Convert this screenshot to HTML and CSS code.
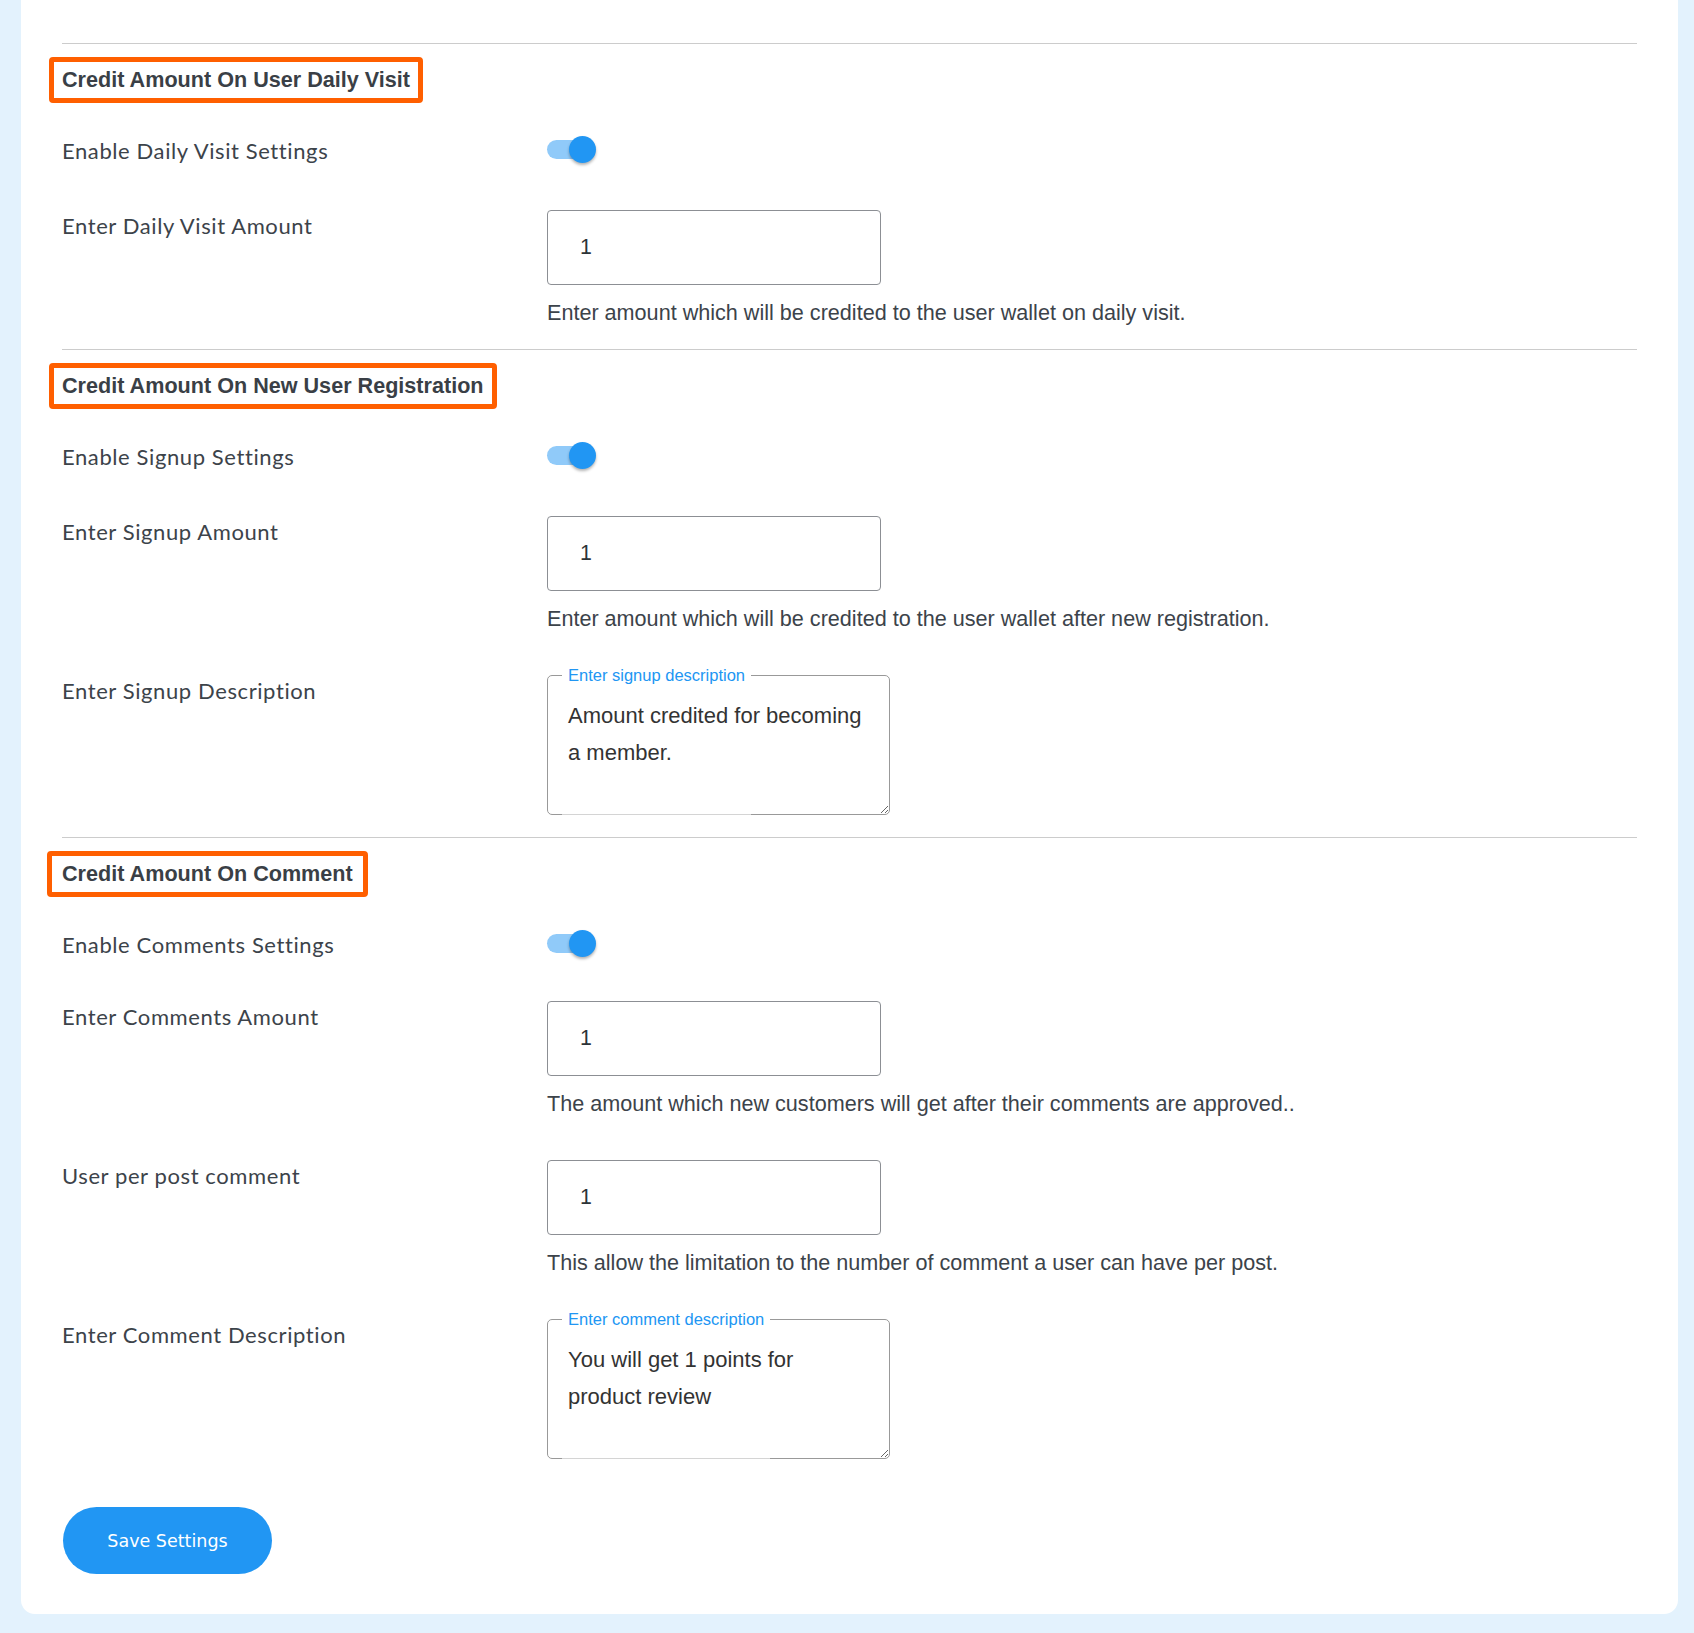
FILE: index.html
```html
<!DOCTYPE html>
<html lang="en">
<head>
<meta charset="UTF-8">
<meta name="viewport" content="width=device-width, initial-scale=1.0">
<title>Wallet Credit Settings</title>
<link rel="stylesheet" href="styles.css">
</head>
<body>
    <form class="card" onsubmit="return false;">

        <section class="group">
            <hr class="divider">
            <h2 class="group-title">Credit Amount On User Daily Visit</h2>
            <div class="row row-switch">
                <div class="row-label">Enable Daily Visit Settings</div>
                <div class="row-field">
                    <label class="switch">
                        <input type="checkbox" checked>
                        <span class="slider"></span>
                    </label>
                </div>
            </div>
            <div class="row">
                <label class="row-label" for="daily-amount">Enter Daily Visit Amount</label>
                <div class="row-field">
                    <input id="daily-amount" class="amount" type="number" value="1">
                    <p class="help">Enter amount which will be credited to the user wallet on daily visit.</p>
                </div>
            </div>
        </section>

        <section class="group">
            <hr class="divider">
            <h2 class="group-title">Credit Amount On New User Registration</h2>
            <div class="row row-switch">
                <div class="row-label">Enable Signup Settings</div>
                <div class="row-field">
                    <label class="switch">
                        <input type="checkbox" checked>
                        <span class="slider"></span>
                    </label>
                </div>
            </div>
            <div class="row">
                <label class="row-label" for="signup-amount">Enter Signup Amount</label>
                <div class="row-field">
                    <input id="signup-amount" class="amount" type="number" value="1">
                    <p class="help">Enter amount which will be credited to the user wallet after new registration.</p>
                </div>
            </div>
            <div class="row">
                <label class="row-label" for="signup-desc">Enter Signup Description</label>
                <div class="row-field">
                    <div class="desc-box">
                        <span class="desc-legend">Enter signup description</span>
                        <textarea id="signup-desc">Amount credited for becoming a member.</textarea>
                    </div>
                </div>
            </div>
        </section>

        <section class="group group-last">
            <hr class="divider">
            <h2 class="group-title group-title-wide">Credit Amount On Comment</h2>
            <div class="row row-switch">
                <div class="row-label">Enable Comments Settings</div>
                <div class="row-field">
                    <label class="switch">
                        <input type="checkbox" checked>
                        <span class="slider"></span>
                    </label>
                </div>
            </div>
            <div class="row">
                <label class="row-label" for="comment-amount">Enter Comments Amount</label>
                <div class="row-field">
                    <input id="comment-amount" class="amount" type="number" value="1">
                    <p class="help">The amount which new customers will get after their comments are approved..</p>
                </div>
            </div>
            <div class="row">
                <label class="row-label" for="comment-limit">User per post comment</label>
                <div class="row-field">
                    <input id="comment-limit" class="amount" type="number" value="1">
                    <p class="help">This allow the limitation to the number of comment a user can have per post.</p>
                </div>
            </div>
            <div class="row">
                <label class="row-label" for="comment-desc">Enter Comment Description</label>
                <div class="row-field">
                    <div class="desc-box">
                        <span class="desc-legend">Enter comment description</span>
                        <textarea id="comment-desc">You will get 1 points for product review</textarea>
                    </div>
                </div>
            </div>
        </section>

        <button type="submit" class="save-button">Save Settings</button>
    </form>
</body>
</html>
```

FILE: styles.css
```css
body {
    margin: 0 16px 19px 21px;
    background-color: #E3F2FD;
    font-family: "Liberation Sans", Arial, sans-serif;
    color: #3C434A;
}
.card {
    background: #FFFFFF;
    border-radius: 0 0 14px 14px;
    padding: 43px 41px 40px;
}
.group {
    padding-bottom: 22px;
}
.group-last {
    padding-bottom: 0;
}
.divider {
    height: 1px;
    margin: 0;
    border: none;
    background: #CCCCCC;
}
.group-title {
    width: fit-content;
    margin: 13px 0 0 -13px;
    padding: 0 8px;
    border: 5px solid #FF5F00;
    border-radius: 4px;
    font-size: 21.6px;
    line-height: 36px;
    font-weight: bold;
    color: #3A3F46;
}
.group-title-wide {
    margin-left: -15px;
    padding-left: 10px;
    padding-right: 10px;
}
.row {
    display: grid;
    grid-template-columns: 485px 1fr;
    margin-top: 42px;
}
.row-switch {
    margin-top: 32px;
}
.row-switch + .row {
    margin-top: 43px;
}
.group-last .row-switch + .row {
    margin-top: 40px;
}
.row-label {
    font-family: "Lato", "Noto Sans", sans-serif;
    font-size: 22px;
    letter-spacing: 0.6px;
    line-height: 32px;
    color: #3C434A;
}
.row-field {
    display: flex;
    flex-direction: column;
    align-items: flex-start;
}
.row-switch .row-field {
    height: 32px;
    justify-content: center;
}

/* toggle */
.switch {
    position: relative;
    display: block;
    width: 49px;
    height: 27px;
    margin-top: -3px;
    cursor: pointer;
}
.switch input {
    display: none;
}
.slider {
    position: absolute;
    left: 0;
    top: 4px;
    width: 46px;
    height: 19px;
    border-radius: 10px;
    background: #90CAF9;
}
.slider::after {
    content: "";
    position: absolute;
    right: -3px;
    top: -4px;
    width: 27px;
    height: 27px;
    border-radius: 50%;
    background: #2196F3;
    box-shadow: 0 2px 3px rgba(0, 0, 0, 0.3);
}

.amount {
    box-sizing: border-box;
    width: 334px;
    height: 75px;
    margin: 0;
    padding: 0 32px;
    border: 1px solid #8C8F94;
    border-radius: 4px;
    font-family: "Liberation Sans", Arial, sans-serif;
    font-size: 21.33px;
    color: #2C3338;
    background: #FFFFFF;
}
.amount::-webkit-inner-spin-button,
.amount::-webkit-outer-spin-button {
    -webkit-appearance: none;
    margin: 0;
}
.help {
    margin: 14px 0 0;
    font-size: 21.6px;
    line-height: 28px;
    color: #3C434A;
}

/* outlined description field */
.desc-box {
    position: relative;
    width: 343px;
    height: 140px;
}
.desc-box textarea {
    box-sizing: border-box;
    width: 100%;
    height: 100%;
    margin: 0;
    padding: 21px 20px 0;
    border: 1px solid #999999;
    border-radius: 5px;
    font-family: "Liberation Sans", Arial, sans-serif;
    font-size: 22px;
    line-height: 37px;
    color: #333333;
    background: #FFFFFF;
}
.desc-legend {
    position: absolute;
    left: 15px;
    top: -10px;
    z-index: 1;
    padding: 0 6px;
    background: #FFFFFF;
    font-size: 16.5px;
    line-height: 20px;
    color: #2196F3;
}
.desc-legend::after {
    content: "";
    position: absolute;
    left: 0;
    right: 0;
    top: 149px;
    height: 1px;
    background: #D4D4D4;
}

.save-button {
    display: block;
    width: 209px;
    height: 67px;
    margin: 48px 0 0 1px;
    border: none;
    border-radius: 34px;
    background: #2196F3;
    color: #FFFFFF;
    font-family: "DejaVu Sans", Verdana, sans-serif;
    font-size: 17.5px;
    cursor: pointer;
}
```
